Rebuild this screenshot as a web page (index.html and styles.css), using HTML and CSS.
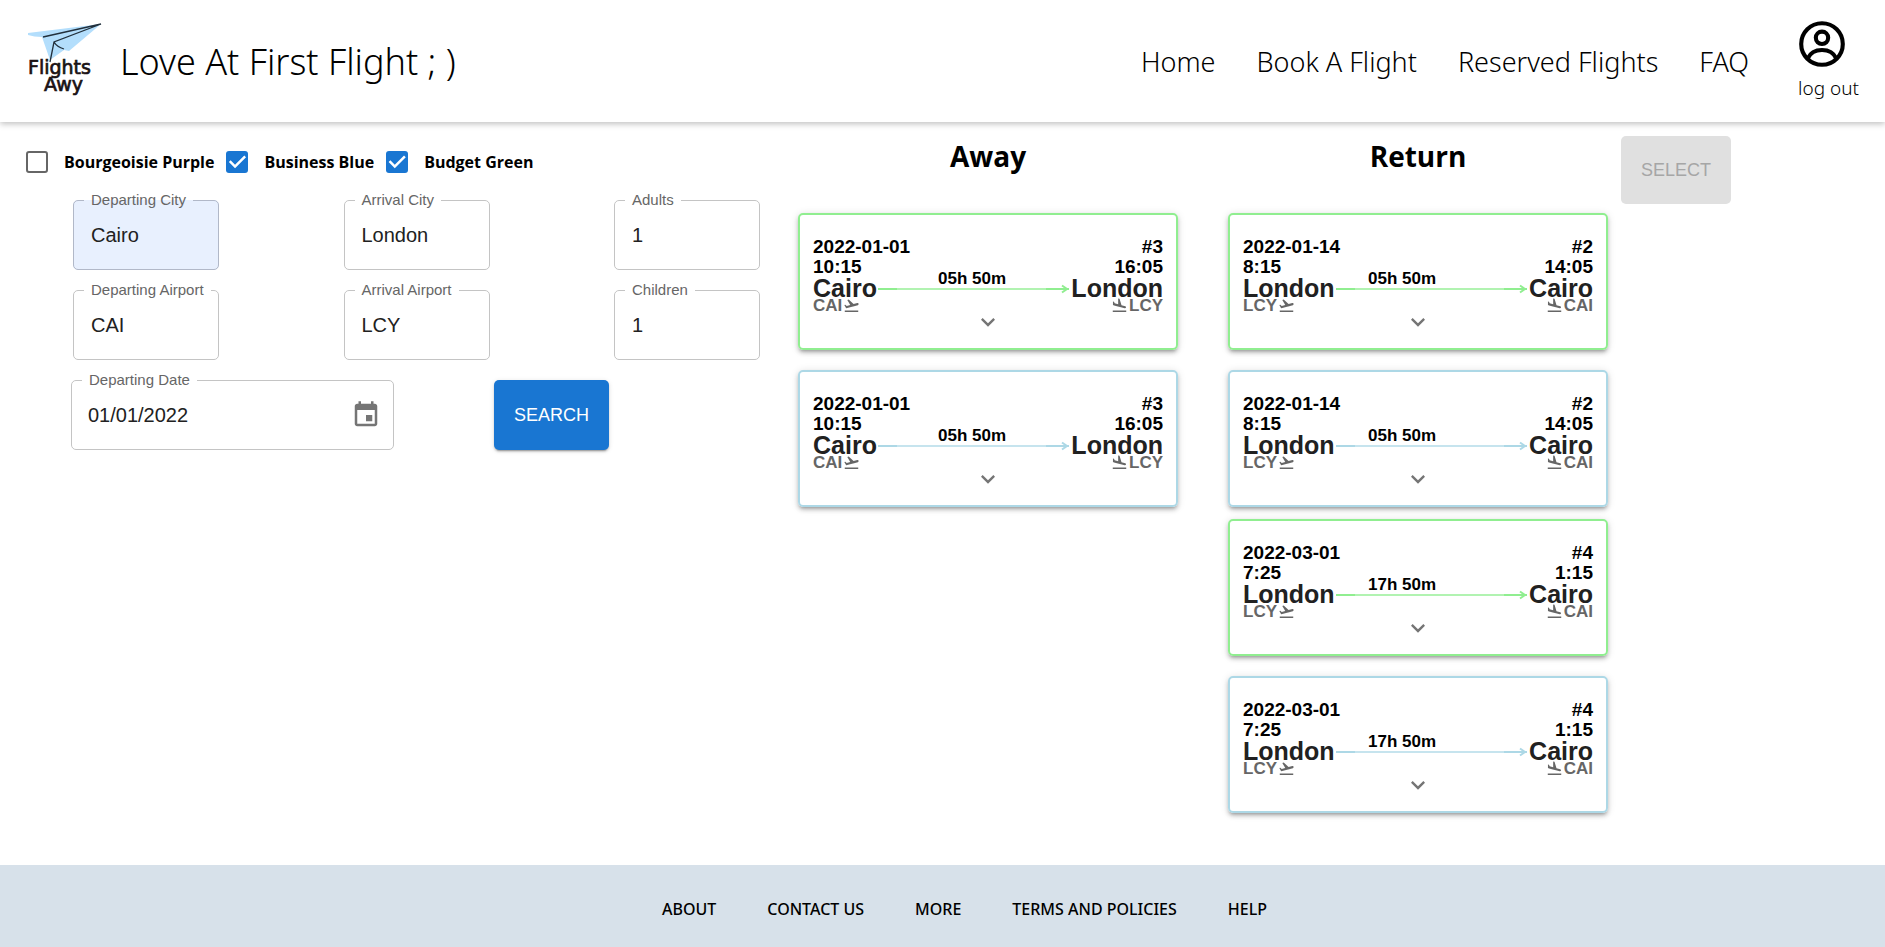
FILE: index.html
```html
<!DOCTYPE html>
<html lang="en">
<head>
<meta charset="utf-8">
<title>Flights Awy</title>
<link rel="stylesheet" href="styles.css">
</head>
<body>
<svg class="symbols" aria-hidden="true">
  <symbol id="takeoff" viewBox="0 0 24 24"><path d="M2.5 19h19v2h-19zm19.57-9.36c-.21-.8-1.04-1.28-1.84-1.06L14.92 10l-6.9-6.43-1.93.51 4.14 7.17-4.97 1.33-1.97-1.54-1.45.39 1.82 3.16.77 1.33 1.6-.43 5.31-1.42 4.35-1.16L21 11.49c.81-.23 1.28-1.05 1.07-1.85z"/></symbol>
  <symbol id="land" viewBox="0 0 24 24"><path d="M2.5 19h19v2h-19zm7.18-5.73 4.35 1.16 5.31 1.42c.8.21 1.62-.26 1.84-1.06.21-.8-.26-1.62-1.06-1.84l-5.31-1.42-2.76-9.02L10.12 2v8.28L5.15 8.95l-.93-2.32-1.45-.39v5.17l1.6.43 5.31 1.43z"/></symbol>
  <symbol id="more" viewBox="0 0 24 24"><path d="M16.59 8.59 12 13.17 7.41 8.59 6 10l6 6 6-6z"/></symbol>
  <symbol id="head" viewBox="0 0 8 10"><path d="M1 1.5 6 5 1 8.5" fill="none" stroke="currentColor" stroke-width="2"/></symbol>
</svg>

<header class="header">
  <svg class="logo" viewBox="0 0 80 76" role="img" aria-label="Flights Awy">
    <path fill="#b3defc" d="M2 10 75 1 43 28 38 27 24 37 16 14Q8 14 2 12z"/>
    <path fill="none" stroke="#22303c" stroke-width="1.3" d="M17 14 75 1 28 19 24 39M28 19Q31 24 38 26"/>
    <text class="logo-text" x="2" y="51">Flights</text>
    <text class="logo-text" x="18" y="68">Awy</text>
  </svg>
  <h1 class="slogan">Love At First Flight ; )</h1>
  <nav class="nav">
    <a href="#">Home</a>
    <a href="#">Book A Flight</a>
    <a href="#">Reserved Flights</a>
    <a href="#">FAQ</a>
  </nav>
  <button class="account" type="button">
    <svg viewBox="1.5 1.5 21 21" aria-hidden="true"><circle cx="12" cy="12" r="9.1"/><circle cx="12" cy="9.3" r="2.7"/><path d="M5.7 18.4C8 13.4 16 13.4 18.3 18.4"/></svg>
    <span>log out</span>
  </button>
</header>

<main class="main">
  <form class="search">
    <div class="classes">
      <label class="check"><input type="checkbox">Bourgeoisie Purple</label>
      <label class="check"><input type="checkbox" checked>Business Blue</label>
      <label class="check"><input type="checkbox" checked>Budget Green</label>
    </div>
    <div class="fields">
      <fieldset class="field filled"><legend><label for="dc">Departing City</label></legend><input id="dc" type="text" value="Cairo"></fieldset>
      <fieldset class="field"><legend><label for="ac">Arrival City</label></legend><input id="ac" type="text" value="London"></fieldset>
      <fieldset class="field"><legend><label for="ad">Adults</label></legend><input id="ad" type="text" value="1"></fieldset>
      <fieldset class="field"><legend><label for="da">Departing Airport</label></legend><input id="da" type="text" value="CAI"></fieldset>
      <fieldset class="field"><legend><label for="aa">Arrival Airport</label></legend><input id="aa" type="text" value="LCY"></fieldset>
      <fieldset class="field"><legend><label for="ch">Children</label></legend><input id="ch" type="text" value="1"></fieldset>
    </div>
    <div class="submit-row">
      <fieldset class="field date"><legend><label for="dd">Departing Date</label></legend>
        <div class="date-row">
          <input id="dd" type="text" value="01/01/2022">
          <button class="icon-button" type="button" aria-label="Choose date"><svg viewBox="0 0 24 24"><path d="M17 12h-5v5h5v-5zM16 1v2H8V1H6v2H5c-1.11 0-1.99.9-1.99 2L3 19c0 1.1.89 2 2 2h14c1.1 0 2-.9 2-2V5c0-1.1-.9-2-2-2h-1V1h-2zm3 18H5V8h14v11z"/></svg></button>
        </div>
      </fieldset>
      <button class="button primary" type="button">SEARCH</button>
    </div>
  </form>

  <section class="results">
    <h2>Away</h2>
    <div class="pair">
      <article class="card green">
        <div class="row when"><span>2022-01-01</span><span class="number">#3</span></div>
        <div class="row when"><span>10:15</span><span>16:05</span></div>
        <div class="row city"><span>Cairo</span><span class="line"><svg><use href="#head"/></svg></span><span>London</span></div>
        <div class="row code"><span>CAI<svg><use href="#takeoff"/></svg></span><span><svg><use href="#land"/></svg>LCY</span></div>
        <span class="duration">05h 50m</span>
        <button class="expand" type="button" aria-label="Show details"><svg><use href="#more"/></svg></button>
      </article>
      <article class="card blue">
        <div class="row when"><span>2022-01-01</span><span class="number">#3</span></div>
        <div class="row when"><span>10:15</span><span>16:05</span></div>
        <div class="row city"><span>Cairo</span><span class="line"><svg><use href="#head"/></svg></span><span>London</span></div>
        <div class="row code"><span>CAI<svg><use href="#takeoff"/></svg></span><span><svg><use href="#land"/></svg>LCY</span></div>
        <span class="duration">05h 50m</span>
        <button class="expand" type="button" aria-label="Show details"><svg><use href="#more"/></svg></button>
      </article>
    </div>
  </section>

  <section class="results">
    <h2>Return</h2>
    <div class="pair">
      <article class="card green">
        <div class="row when"><span>2022-01-14</span><span class="number">#2</span></div>
        <div class="row when"><span>8:15</span><span>14:05</span></div>
        <div class="row city"><span>London</span><span class="line"><svg><use href="#head"/></svg></span><span>Cairo</span></div>
        <div class="row code"><span>LCY<svg><use href="#takeoff"/></svg></span><span><svg><use href="#land"/></svg>CAI</span></div>
        <span class="duration">05h 50m</span>
        <button class="expand" type="button" aria-label="Show details"><svg><use href="#more"/></svg></button>
      </article>
      <article class="card blue">
        <div class="row when"><span>2022-01-14</span><span class="number">#2</span></div>
        <div class="row when"><span>8:15</span><span>14:05</span></div>
        <div class="row city"><span>London</span><span class="line"><svg><use href="#head"/></svg></span><span>Cairo</span></div>
        <div class="row code"><span>LCY<svg><use href="#takeoff"/></svg></span><span><svg><use href="#land"/></svg>CAI</span></div>
        <span class="duration">05h 50m</span>
        <button class="expand" type="button" aria-label="Show details"><svg><use href="#more"/></svg></button>
      </article>
    </div>
    <div class="pair">
      <article class="card green">
        <div class="row when"><span>2022-03-01</span><span class="number">#4</span></div>
        <div class="row when"><span>7:25</span><span>1:15</span></div>
        <div class="row city"><span>London</span><span class="line"><svg><use href="#head"/></svg></span><span>Cairo</span></div>
        <div class="row code"><span>LCY<svg><use href="#takeoff"/></svg></span><span><svg><use href="#land"/></svg>CAI</span></div>
        <span class="duration">17h 50m</span>
        <button class="expand" type="button" aria-label="Show details"><svg><use href="#more"/></svg></button>
      </article>
      <article class="card blue">
        <div class="row when"><span>2022-03-01</span><span class="number">#4</span></div>
        <div class="row when"><span>7:25</span><span>1:15</span></div>
        <div class="row city"><span>London</span><span class="line"><svg><use href="#head"/></svg></span><span>Cairo</span></div>
        <div class="row code"><span>LCY<svg><use href="#takeoff"/></svg></span><span><svg><use href="#land"/></svg>CAI</span></div>
        <span class="duration">17h 50m</span>
        <button class="expand" type="button" aria-label="Show details"><svg><use href="#more"/></svg></button>
      </article>
    </div>
  </section>

  <button class="button select" type="button" disabled>SELECT</button>
</main>

<footer class="footer">
  <a href="#">ABOUT</a>
  <a href="#">CONTACT US</a>
  <a href="#">MORE</a>
  <a href="#">TERMS AND POLICIES</a>
  <a href="#">HELP</a>
</footer>
</body>
</html>
```
FILE: styles.css
```css
* { box-sizing: border-box; }

body {
  margin: 0;
  min-height: 100vh;
  display: flex;
  flex-direction: column;
  background: #fff;
  color: #000;
  font-family: "Open Sans", "Noto Sans", sans-serif;
}

button, input { font: inherit; color: inherit; margin: 0; }
button { border: 0; background: none; padding: 0; cursor: pointer; }
a { color: inherit; text-decoration: none; }
svg { display: block; fill: currentColor; }
.symbols { position: absolute; width: 0; height: 0; }

.header {
  display: flex;
  align-items: center;
  height: 122px;
  padding: 0 26px;
  box-shadow: 0 2px 6px rgba(0, 0, 0, .25);
  font-family: "Noto Sans", "Open Sans", sans-serif;
  font-weight: 300;
}
.logo { width: 80px; height: 76px; }
.logo-text { font: 19px "DejaVu Sans", sans-serif; fill: #1a1214; stroke: #1a1214; stroke-width: .7px; }
.slogan { margin: 0 auto 0 14px; font-size: 36px; font-weight: 300; }
.nav { display: flex; gap: 41px; font-size: 27px; }
.account {
  display: flex;
  flex-direction: column;
  align-items: flex-start;
  gap: 8px;
  margin-left: 49px;
  padding-bottom: 2px;
  font-size: 19px;
  font-weight: 300;
  line-height: 24px;
}
.account svg { width: 48px; height: 48px; fill: none; stroke: currentColor; stroke-width: 1.8; }

.main {
  flex: 1;
  display: grid;
  grid-template-columns: 798fr 430fr 393fr 264fr;
  align-items: start;
  padding: 14px 0 40px;
}

.search { padding: 8px 38px 0 71px; }
.classes { display: flex; gap: 12px; align-items: center; height: 36px; margin-left: -45px; }
.check { display: flex; align-items: center; gap: 16px; font-size: 16px; font-weight: 700; white-space: nowrap; }
.check input {
  appearance: none;
  width: 22px;
  height: 22px;
  border: 2px solid #666;
  border-radius: 3px;
}
.check input:checked { border: 0; background: #1976d2; }
.check input:checked::after {
  content: "";
  display: block;
  height: 22px;
  background: #fff;
  clip-path: polygon(39% 78%, 11% 50%, 19% 42%, 39% 62%, 81% 20%, 89% 28%);
}

.fields {
  display: grid;
  grid-template-columns: repeat(3, 146px);
  justify-content: space-between;
  row-gap: 12px;
  margin-top: 12px;
  padding-left: 2px;
}
.field {
  min-width: 0;
  height: 78px;
  margin: 0;
  padding: 0 10px;
  border: 1px solid #c4c4c4;
  border-radius: 5px;
  font-family: "Liberation Sans", Arial, sans-serif;
}
.field legend {
  padding: 0 7px;
  font-size: 15px;
  line-height: 16px;
  color: #666;
  white-space: nowrap;
}
.field input {
  display: block;
  width: 100%;
  height: 54px;
  padding: 0 7px;
  border: 0;
  background: none;
  outline: 0;
  font-size: 20px;
  color: #212121;
}
.filled { background: #e8f0fe; border-color: #b1b8c8; }
.submit-row { display: flex; align-items: flex-end; gap: 100px; margin-top: 12px; }
.date { width: 323px; }
.date-row { display: flex; align-items: center; }
.date input { padding: 0 6px; }
.icon-button { color: #757575; margin-right: 2px; }
.icon-button svg { width: 30px; height: 30px; }

.button {
  border-radius: 5px;
  padding: 0 20px;
  font: 18px "Liberation Sans", Arial, sans-serif;
}
.primary {
  height: 70px;
  background: #1976d2;
  color: #fff;
  box-shadow: 0 3px 1px -2px rgba(0, 0, 0, .2), 0 2px 2px rgba(0, 0, 0, .14), 0 1px 5px rgba(0, 0, 0, .12);
}
.select { justify-self: start; height: 68px; background: #e0e0e0; color: #a6a6a6; }

.results { padding-right: 50px; }
.results + .results { padding-right: 13px; }
.results h2 {
  margin: 0 0 37px;
  font-size: 28px;
  line-height: 40px;
  text-align: center;
}
.pair { display: grid; gap: 20px; margin-bottom: 12px; }
.card {
  position: relative;
  padding: 22px 13px 12px;
  border: 2px solid;
  border-radius: 5px;
  box-shadow: 0 3px 3px -2px rgba(0, 0, 0, .2), 0 3px 4px rgba(0, 0, 0, .18), 0 1px 8px rgba(0, 0, 0, .12);
  font-family: "Liberation Sans", Arial, sans-serif;
  font-weight: 700;
}
.green { border-color: #90ee90; --tone: #90ee90; --pale: #b1f3b1; }
.blue { border-color: #add8e6; --tone: #add8e6; --pale: #c6e4ee; }
.row { display: flex; justify-content: space-between; }
.when { font-size: 19px; line-height: 20px; }
.city { font-size: 25px; line-height: 23px; color: #212121; align-items: center; }
.line {
  flex: 1;
  display: flex;
  justify-content: flex-end;
  align-items: center;
  height: 2px;
  margin: 0 2px 0 1px;
  color: var(--tone);
  background: linear-gradient(90deg, var(--tone) 10%, var(--pale) 10%, var(--pale) 88%, var(--tone) 88%);
}
.line svg { width: 8px; height: 10px; flex: none; }
.code { font-size: 17px; line-height: 12px; color: #666; }
.code span { display: flex; align-items: flex-end; height: 12px; gap: 1px; }
.code svg { width: 17px; height: 17px; margin-bottom: -2px; }
.duration { position: absolute; left: 138px; top: 54px; font-size: 17px; line-height: 20px; }
.expand { display: block; margin: -4px auto 0; color: #757575; }
.expand svg { width: 28px; height: 28px; }

.footer {
  display: flex;
  justify-content: center;
  align-items: center;
  gap: 51px;
  height: 82px;
  padding: 6px 0 0 44px;
  background: #d7e1ea;
  font-family: "Noto Sans", "Open Sans", sans-serif;
  font-size: 16px;
  font-weight: 500;
}
```
